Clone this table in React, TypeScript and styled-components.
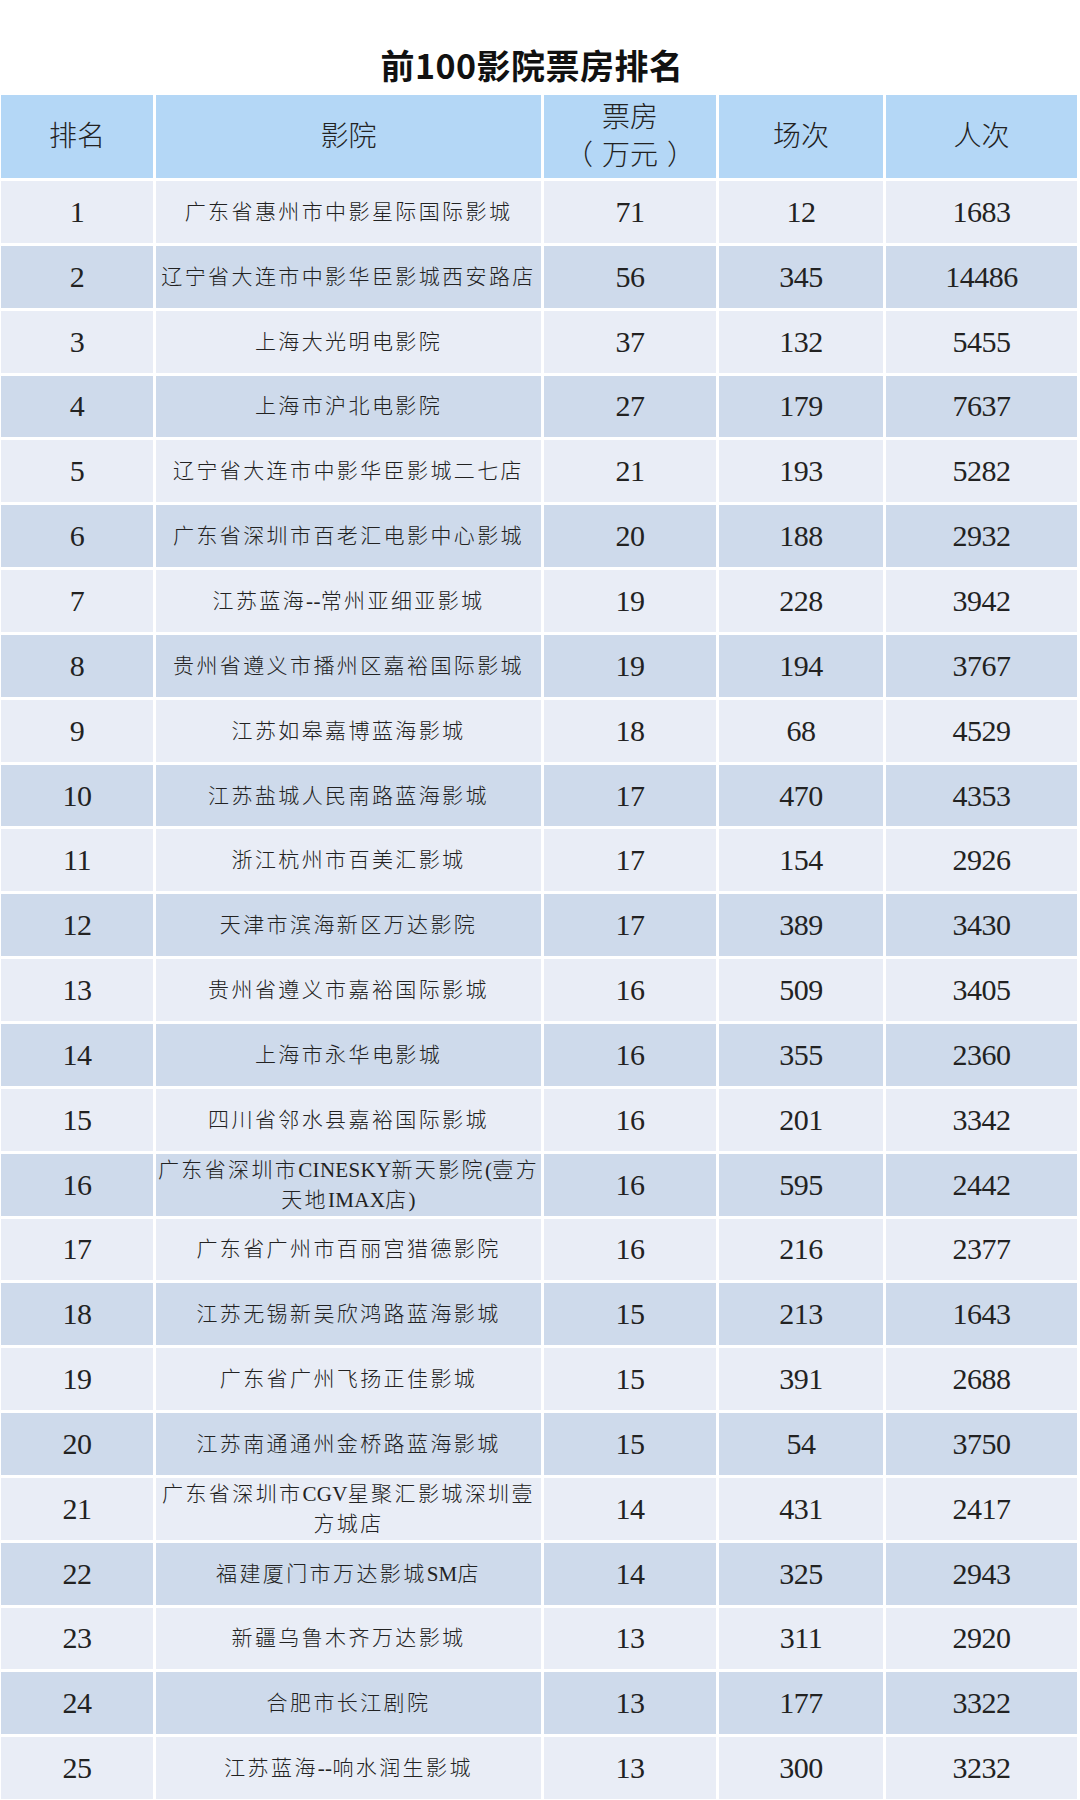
import React from "react";
import styled, { createGlobalStyle } from "styled-components";

const GlobalStyle = createGlobalStyle`
  html, body {
    margin: 0;
    padding: 0;
    background: #ffffff;
  }
  body {
    font-family: "Liberation Serif", "Noto Sans CJK SC", serif;
    color: #222;
  }
`;

const Page = styled.div`
  width: 1080px;
  height: 1800px;
  overflow: hidden;
  background: #ffffff;
`;

const TitleBar = styled.div`
  height: 95px;
  box-sizing: border-box;
  display: flex;
  align-items: flex-end;
  justify-content: center;
  padding: 0 16px 10px 0;
`;

const Title = styled.h1`
  margin: 0;
  font-family: "Noto Sans CJK SC", "Liberation Sans", sans-serif;
  font-weight: 700;
  font-size: 34px;
  line-height: 40px;
  color: #111;
  letter-spacing: 0.5px;
`;

const Table = styled.div`
  margin-left: 1px;
  width: 1076px;
  display: flex;
  flex-direction: column;
  gap: 3px;
`;

const Row = styled.div<{ $head?: boolean }>`
  display: grid;
  grid-template-columns: 152px 385px 172px 164px 191px;
  column-gap: 3px;
  height: ${(p) => (p.$head ? "83px" : "61.85px")};
`;

const HeadCell = styled.div`
  background: #b4d7f6;
  display: flex;
  flex-direction: column;
  align-items: center;
  justify-content: center;
  text-align: center;
  font-family: "Liberation Serif", "Noto Sans CJK SC", serif;
  font-weight: 300;
  font-size: 28px;
  line-height: 34px;
  color: #222;
`;

const HeadLine = styled.span`
  display: block;
  line-height: 38px;
  white-space: nowrap;
`;

const Bracket = styled.span<{ $side: "open" | "close" }>`
  margin: ${(p) => (p.$side === "open" ? "0 9px 0 0" : "0 0 0 9px")};
`;

const Cell = styled.div<{ $alt: boolean; $name?: boolean }>`
  background: ${(p) => (p.$alt ? "#cedaeb" : "#e9edf6")};
  display: flex;
  align-items: center;
  justify-content: center;
  text-align: center;
  white-space: nowrap;
  color: #222;
  font-family: "Liberation Serif", "Noto Sans CJK SC", serif;
  font-size: ${(p) => (p.$name ? "21px" : "30px")};
  font-weight: ${(p) => (p.$name ? 300 : 400)};
  letter-spacing: ${(p) => (p.$name ? "2.4px" : "-0.5px")};
  line-height: ${(p) => (p.$name ? "30px" : "34px")};
`;

const Latin = styled.span`
  font-family: "Liberation Serif", serif;
  font-size: 21px;
  letter-spacing: 0.3px;
`;

type Item = [number, React.ReactNode, number, number, number];

const rows: Item[] = [
  [1, "广东省惠州市中影星际国际影城", 71, 12, 1683],
  [2, "辽宁省大连市中影华臣影城西安路店", 56, 345, 14486],
  [3, "上海大光明电影院", 37, 132, 5455],
  [4, "上海市沪北电影院", 27, 179, 7637],
  [5, "辽宁省大连市中影华臣影城二七店", 21, 193, 5282],
  [6, "广东省深圳市百老汇电影中心影城", 20, 188, 2932],
  [7, <>江苏蓝海<Latin>--</Latin>常州亚细亚影城</>, 19, 228, 3942],
  [8, "贵州省遵义市播州区嘉裕国际影城", 19, 194, 3767],
  [9, "江苏如皋嘉博蓝海影城", 18, 68, 4529],
  [10, "江苏盐城人民南路蓝海影城", 17, 470, 4353],
  [11, "浙江杭州市百美汇影城", 17, 154, 2926],
  [12, "天津市滨海新区万达影院", 17, 389, 3430],
  [13, "贵州省遵义市嘉裕国际影城", 16, 509, 3405],
  [14, "上海市永华电影城", 16, 355, 2360],
  [15, "四川省邻水县嘉裕国际影城", 16, 201, 3342],
  [
    16,
    <>
      广东省深圳市<Latin>CINESKY</Latin>新天影院<Latin>(</Latin>壹方
      <br />
      天地<Latin>IMAX</Latin>店<Latin>)</Latin>
    </>,
    16,
    595,
    2442,
  ],
  [17, "广东省广州市百丽宫猎德影院", 16, 216, 2377],
  [18, "江苏无锡新吴欣鸿路蓝海影城", 15, 213, 1643],
  [19, "广东省广州飞扬正佳影城", 15, 391, 2688],
  [20, "江苏南通通州金桥路蓝海影城", 15, 54, 3750],
  [
    21,
    <>
      广东省深圳市<Latin>CGV</Latin>星聚汇影城深圳壹
      <br />
      方城店
    </>,
    14,
    431,
    2417,
  ],
  [22, <>福建厦门市万达影城<Latin>SM</Latin>店</>, 14, 325, 2943],
  [23, "新疆乌鲁木齐万达影城", 13, 311, 2920],
  [24, "合肥市长江剧院", 13, 177, 3322],
  [25, <>江苏蓝海<Latin>--</Latin>响水润生影城</>, 13, 300, 3232],
];

export default function App() {
  return (
    <Page>
      <GlobalStyle />
      <TitleBar>
        <Title>前100影院票房排名</Title>
      </TitleBar>
      <Table>
        <Row $head>
          <HeadCell>排名</HeadCell>
          <HeadCell>影院</HeadCell>
          <HeadCell>
            <HeadLine>票房</HeadLine>
            <HeadLine>
              <Bracket $side="open">（</Bracket>万元<Bracket $side="close">）</Bracket>
            </HeadLine>
          </HeadCell>
          <HeadCell>场次</HeadCell>
          <HeadCell>人次</HeadCell>
        </Row>
        {rows.map(([rank, name, box, shows, people], i) => {
          const alt = i % 2 === 1;
          return (
            <Row key={rank}>
              <Cell $alt={alt}>{rank}</Cell>
              <Cell $alt={alt} $name>
                <span>{name}</span>
              </Cell>
              <Cell $alt={alt}>{box}</Cell>
              <Cell $alt={alt}>{shows}</Cell>
              <Cell $alt={alt}>{people}</Cell>
            </Row>
          );
        })}
      </Table>
    </Page>
  );
}
